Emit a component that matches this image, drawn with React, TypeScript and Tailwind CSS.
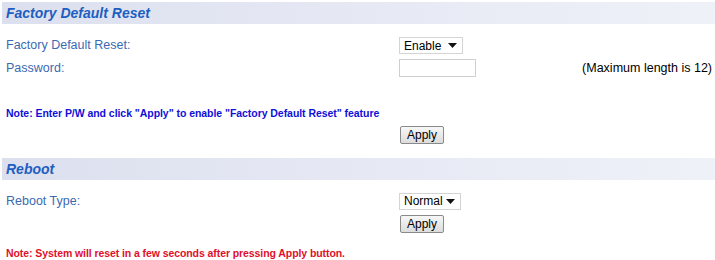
import React from "react";

function SectionHeader({ title }: { title: string }) {
  return (
    <div className="ml-[2px] flex h-[22px] items-center bg-gradient-to-r from-[#dce0ee] via-[#e6e9f4] to-[#eff1f8] pl-[4px]">
      <span className="text-[14px] font-bold italic text-[#1d5ec2]">{title}</span>
    </div>
  );
}

function Select({ value, width }: { value: string; width: string }) {
  return (
    <div
      className={`flex h-[17px] ${width} items-center justify-between border border-[#d4d4d4] bg-white pl-[4px] pr-[5px] text-[12px] text-black`}
    >
      <span>{value}</span>
      <svg width="9" height="5" viewBox="0 0 9 5">
        <path d="M0 0h9L4.5 5z" fill="#111" />
      </svg>
    </div>
  );
}

function ApplyButton() {
  return (
    <button
      type="button"
      className="flex h-[18px] w-[44px] items-center justify-center rounded-[2px] border border-[#8a8a8a] bg-gradient-to-b from-[#f7f7f7] to-[#dcdcdc] text-[12px] text-black"
    >
      Apply
    </button>
  );
}

export default function App() {
  return (
    <div
      className="h-[260px] w-[715px] overflow-hidden bg-white pt-[2px]"
      style={{ fontFamily: '"Liberation Sans", Arial, sans-serif' }}
    >
      <SectionHeader title="Factory Default Reset" />

      <div className="mt-[13px] flex h-[17px] items-center">
        <span className="w-[399px] pl-[6px] text-[12.5px] text-[#3b6ab3]">Factory Default Reset:</span>
        <Select value="Enable" width="w-[64px]" />
      </div>

      <div className="mt-[5px] flex h-[18px] items-center">
        <span className="w-[399px] pl-[6px] text-[12.5px] text-[#3b6ab3]">Password:</span>
        <div className="h-[18px] w-[77px] border border-[#cfcfcf] bg-white" />
        <span className="ml-auto pr-[3px] text-[12.5px] text-black">(Maximum length is 12)</span>
      </div>

      <div className="mt-[29px] pl-[6px] text-[10.5px] font-bold leading-[14px] tracking-[-0.05px] text-[#1010d8]">
        Note: Enter P/W and click "Apply" to enable "Factory Default Reset" feature
      </div>

      <div className="mt-[6px] pl-[400px]">
        <ApplyButton />
      </div>

      <div className="mt-[14px]">
        <SectionHeader title="Reboot" />
      </div>

      <div className="mt-[13px] flex h-[16px] items-center">
        <span className="w-[399px] pl-[6px] text-[12.5px] text-[#3b6ab3]">Reboot Type:</span>
        <Select value="Normal" width="w-[62px]" />
      </div>

      <div className="mt-[6px] pl-[400px]">
        <ApplyButton />
      </div>

      <div className="mt-[13px] pl-[6px] text-[10.5px] font-bold leading-[14px] tracking-[-0.08px] text-[#e0102a]">
        Note: System will reset in a few seconds after pressing Apply button.
      </div>
    </div>
  );
}
